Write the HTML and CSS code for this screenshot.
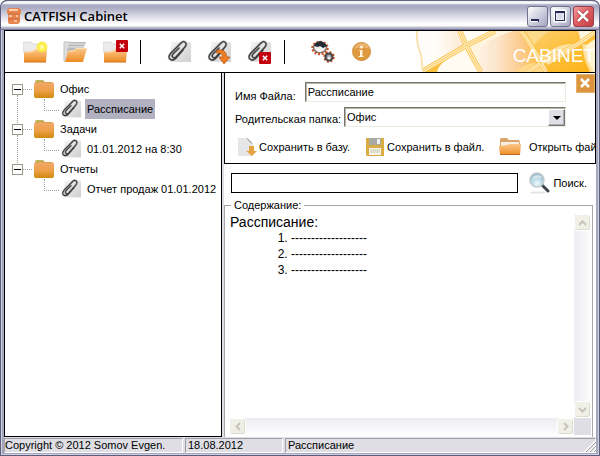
FILE: index.html
```
<!DOCTYPE html>
<html lang="ru">
<head>
<meta charset="utf-8">
<title>CATFISH Cabinet</title>
<link rel="stylesheet" href="styles.css">
</head>
<body>
<svg class="defs" width="0" height="0" aria-hidden="true">
  <defs>
    <linearGradient id="orange" x2="0" y2="1"><stop stop-color="#fbc78a"/><stop offset=".6" stop-color="#f3a44e"/><stop offset="1" stop-color="#ee8a22"/></linearGradient>
    <linearGradient id="tan" x2="0" y2="1"><stop stop-color="#f2a866"/><stop offset=".5" stop-color="#eda04a"/><stop offset="1" stop-color="#cf8a0c"/></linearGradient>
    <linearGradient id="paper" x2="1" y2="1"><stop stop-color="#f4f4f4"/><stop offset="1" stop-color="#cfcfd1"/></linearGradient>
    <linearGradient id="gold" x2="1" y2="1"><stop stop-color="#fcd078"/><stop offset=".5" stop-color="#fcc03c"/><stop offset="1" stop-color="#fcb415"/></linearGradient>
    <linearGradient id="petal" x2="1"><stop stop-color="#fffaf3"/><stop offset=".4" stop-color="#fce7cf"/><stop offset=".7" stop-color="#fbcb8c"/><stop offset="1" stop-color="#fcb829"/></linearGradient>
    <linearGradient id="blush" x2="1"><stop offset=".4" stop-color="#fffdf9"/><stop offset="1" stop-color="#fbe6cd"/></linearGradient>
    <radialGradient id="sun"><stop stop-color="#fffde0"/><stop offset=".4" stop-color="#fff45c"/><stop offset=".75" stop-color="#fbe93c"/><stop offset="1" stop-color="#fbe93c" stop-opacity="0"/></radialGradient>
    <radialGradient id="lens" cx=".5" cy=".75" r=".7"><stop stop-color="#eefafb"/><stop offset=".6" stop-color="#b3d6e2"/><stop offset="1" stop-color="#8fb3c4"/></radialGradient>
    <symbol id="folder-closed" viewBox="0 0 24 24">
      <path d="M0 2h8l2 2h11v8H0z" fill="#ebebeb" stroke="#cdcdcd" stroke-width=".6"/>
      <path d="M1 22V12l8-1 3-2h12l-1 13z" fill="url(#orange)"/>
      <path d="M2 12.500l7-.7 3-2h11" fill="none" stroke="#fde1bd"/>
      <path d="M1 22h22" stroke="#cf7217"/>
    </symbol>
    <symbol id="clip" viewBox="0 0 24 24">
      <path d="M4 2h20v20H4z" fill="url(#paper)"/>
      <g fill="none" stroke-linecap="round" stroke-linejoin="round">
        <path d="M12 8L6 14c-2 3 1 5 3 3l9-10c3-4-1-7-4-4L4 13c-5 6 1 9 5 5l7-8" stroke="#bbb" stroke-width="2.600"/>
        <path d="M12 8L6 14c-2 3 1 5 3 3l9-10c3-4-1-7-4-4L4 13c-5 6 1 9 5 5l7-8" stroke="#3b3b3b" stroke-width="1.300"/>
      </g>
    </symbol>
    <symbol id="folder-flat" viewBox="0 0 20 20">
      <path d="M1 3q0-2 2-2h6l2 2h7q1 0 1 2v12H1z" fill="#d9a45c"/>
      <path d="M2 2h7" stroke="#a4bd5f" stroke-width="1"/>
      <path d="M0 5q0-1 1-1h18q1 0 1 1v12q0 2-2 2H2q-2 0-2-2z" fill="url(#tan)"/>
    </symbol>
    <symbol id="delete-mark" viewBox="0 0 11 11">
      <rect width="11" height="11" rx="1" fill="#c4000c"/>
      <path d="M3.500 3.500l4 4m0-4l-4 4" stroke="#fff" stroke-width="1.400"/>
    </symbol>
  </defs>
</svg>
<div class="window">
  <header class="titlebar">
    <svg class="app-icon" width="16" height="18" viewBox="0 0 16 18" aria-hidden="true">
      <path d="M1 3l2-2h10l2 2v3l-1 1v8l-2 2H3l-1-2V7L1 6z" fill="#e8854d"/>
      <path d="M3 2h9v2H3z" fill="#fbd0b2"/><path d="M2 7h12M2 12h12" stroke="#cf6a3a"/>
      <path d="M3 9h3m4 0h2M8 14h3" stroke="#fff"/>
    </svg>
    <h1>CATFISH Cabinet</h1>
    <button class="caption" aria-label="Minimize"><svg width="21" height="21"><rect x="4" y="13" width="8" height="3" fill="#27275a"/><path d="M4 15.500h7" stroke="#fff"/></svg></button>
    <button class="caption" aria-label="Maximize"><svg width="21" height="21"><rect x="5" y="5" width="10" height="10" fill="#dcdce8" stroke="#fff" stroke-width="3"/><rect x="5.500" y="5.500" width="9" height="9" fill="none" stroke="#27275a"/><path d="M5 6h10" stroke="#27275a" stroke-width="2"/></svg></button>
    <button class="caption caption-close" aria-label="Close"><svg width="21" height="21"><path d="M5 5l10 10M15 5L5 15" stroke="#a63543" stroke-width="4"/><path d="M5 5l10 10M15 5L5 15" stroke="#fff" stroke-width="2.500"/></svg></button>
  </header>

  <div class="client">
    <nav class="toolbar">
      <div class="tools">
        <button class="tool" aria-label="Новая папка"><svg width="26" height="24" viewBox="0 0 26 24"><use href="#folder-closed" width="24" height="24"/><circle cx="19" cy="7" r="6" fill="url(#sun)"/></svg></button>
        <button class="tool" aria-label="Открыть папку"><svg width="24" height="24" viewBox="0 0 24 24"><path d="M1 2h6l1 2h10v17H1z" fill="#dedede" stroke="#c3c3c3"/><path d="M5 6l2-4h16l-4 10H4z" fill="#b9bbbb"/><path d="M6 4h16M5 7h16" stroke="#e8eaea"/><path d="M2 22L5 11l7-1 1-2h11l-4 14z" fill="url(#orange)"/><path d="M5 11.500l7-1 1-2h10" stroke="#fde1bd" fill="none"/></svg></button>
        <button class="tool" aria-label="Удалить папку"><svg width="25" height="24" viewBox="0 0 25 24"><use href="#folder-closed" width="24" height="24"/><use href="#delete-mark" x="13" y="0" width="12" height="12"/></svg></button>
      </div>
      <span class="divider"></span>
      <div class="tools">
        <button class="tool" aria-label="Новый файл"><svg width="24" height="24"><use href="#clip"/></svg></button>
        <button class="tool" aria-label="Импорт файла"><svg width="24" height="24" viewBox="0 0 24 24"><use href="#clip"/><path d="M9 11q9-4 11 6h3l-6 7-5-7h4q-1-5-7-4z" fill="#f07e20" stroke="#b95510" stroke-width=".7"/></svg></button>
        <button class="tool" aria-label="Удалить файл"><svg width="24" height="24"><use href="#clip"/><use href="#delete-mark" x="12" y="12" width="12" height="12"/></svg></button>
      </div>
      <span class="divider"></span>
      <div class="tools">
        <button class="tool" aria-label="Настройки"><svg width="24" height="24" viewBox="0 0 24 24">
          <ellipse cx="9" cy="8" rx="7.500" ry="6" fill="none" stroke="#c9551f" stroke-width="2.500" stroke-dasharray="2 1.500"/>
          <ellipse cx="9" cy="7.500" rx="6.500" ry="5" fill="#eee" stroke="#8b6f66" stroke-width="1.500"/><path d="M3 6q1-4 6-5 5 1 7 5l-4 2-3-2-2 1z" fill="#252a33"/><path d="M5 9q2-2 3 0t4-1l-2 4H7z" fill="#f9f9f9"/>
          <circle cx="18" cy="17" r="4.500" fill="none" stroke="#c9551f" stroke-width="2.500" stroke-dasharray="2 1.500"/>
          <circle cx="18" cy="17" r="3.500" fill="#9ea1a5" stroke="#434448" stroke-width="2"/><circle cx="18" cy="18" r="1.500" fill="#eee"/></svg></button>
        <button class="tool" aria-label="О программе"><svg width="24" height="24" viewBox="0 0 24 24"><circle cx="10.500" cy="11.500" r="9.200" fill="#de9840" stroke="#c98632" stroke-width=".6"/><path d="M3 9q2-6 8-6t8 6q-8-3-16 0z" fill="#eab36c"/><path d="M8.500 10h3v6h1v1h-5v-1h1.500v-5H8z" fill="#fff3e0"/><circle cx="10.500" cy="7" r="1.500" fill="#fff3e0"/></svg></button>
      </div>
      <div class="banner">
        <svg class="banner-art" width="180" height="41" viewBox="0 0 180 41" preserveAspectRatio="xMaxYMid slice" aria-hidden="true">
          <path d="M1 0h45l6 14L9 39Q8 20 1 0z" fill="url(#blush)"/>
          <path d="M52 14L46 0h60l26 41H66z" fill="url(#petal)"/>
          <path d="M46 0h36L52 14z" fill="#fffcf4"/>
          <path d="M9 41L52 14l14 27z" fill="#fffbf2"/>
          <path d="M9 41L51 16 31 29q-8 6-9 12z" fill="#fcc03f"/>
          <path d="M106 0h74v41h-48l-12-20z" fill="url(#gold)"/>
          <path d="M111 0h23q-9 6-15 14z" fill="#fdd98c"/>
          <path d="M126 28q14-16 34-15l-3 7-24 14z" fill="#fde2a4"/>
          <path d="M163 0h17L163 16q4-8 0-16z" fill="#fff6df"/>
          <path d="M170 15l10-7v33h-5q-5-12-5-26z" fill="#fff3d2"/>
          <path d="M66 41q-5-18 1-25Q77 6 98 0H80L52 14z" fill="#fff4de"/>
          <path d="M100 41q10-10 25-9l6 9z" fill="#fdd98c"/>
          <g fill="none" stroke="#fac04a" stroke-width="5"><path d="M8 40L52 14Q69 6 80 0M45 0q7 18 21 41M106 0q14 19 25 41M112 41l24-15Q164 15 180 1"/></g>
          <g fill="none" stroke="#ffe9b4" stroke-width="3.500"><path d="M8 40L52 14Q69 6 80 0M45 0q7 18 21 41M106 0q14 19 25 41M112 41l24-15Q164 15 180 1"/></g>
          <g fill="none" stroke="#f8cf70"><path d="M8 40L52 14Q69 6 80 0M45 0q7 18 21 41M106 0q14 19 25 41M112 41l24-15Q164 15 180 1"/></g>
          <path d="M169 13q0 14 8 28" fill="none" stroke="#ffe2a0" stroke-width="3"/>
          <path d="M2 0q-1 11 3 21 3 8 2 18" fill="none" stroke="#fae3ae" stroke-width="2"/>
        </svg>
        <span class="banner-title">CABINET</span>
      </div>
    </nav>

    <main class="workspace">
      <ul class="tree">
        <li class="branch">
          <div class="row"><button class="toggle" aria-label="Свернуть"></button><svg width="20" height="20"><use href="#folder-flat"/></svg><span class="name">Офис</span></div>
          <div class="row leaf"><svg width="20" height="20"><use href="#clip"/></svg><span class="name selected">Рассписание</span></div>
        </li>
        <li class="branch">
          <div class="row"><button class="toggle" aria-label="Свернуть"></button><svg width="20" height="20"><use href="#folder-flat"/></svg><span class="name">Задачи</span></div>
          <div class="row leaf"><svg width="20" height="20"><use href="#clip"/></svg><span class="name">01.01.2012 на 8:30</span></div>
        </li>
        <li class="branch">
          <div class="row"><button class="toggle" aria-label="Свернуть"></button><svg width="20" height="20"><use href="#folder-flat"/></svg><span class="name">Отчеты</span></div>
          <div class="row leaf"><svg width="20" height="20"><use href="#clip"/></svg><span class="name">Отчет продаж 01.01.2012</span></div>
        </li>
      </ul>

      <section class="details">
        <form class="properties">
          <button type="button" class="close-panel" aria-label="Закрыть"><svg width="19" height="19"><path d="M5 5l8 8M13 5l-8 8" stroke="#fff" stroke-width="2.500"/></svg></button>
          <div class="field"><label for="file">Имя Файла:</label><input id="file" class="sunken" value="Рассписание"></div>
          <div class="field field-parent"><label for="parent">Родительская папка:</label>
            <span class="combo"><select id="parent" class="sunken"><option>Офис</option></select><span class="combo-arrow"><svg width="8" height="4"><path d="M0 0h8L4 4z"/></svg></span></span></div>
          <div class="actions">
            <button type="button"><svg width="20" height="20" viewBox="0 0 20 20"><path d="M1 1h9l6 6v12H1z" fill="#e5e6e7"/><path d="M9 0l7 7-2-1-3-3z" fill="#777"/><path d="M12 9h5v5h3l-5 5-6-5h3z" fill="#e5a444"/></svg>Сохранить в базу.</button>
            <button type="button"><svg width="20" height="20" viewBox="0 0 20 20"><path d="M1 1h18v18H2l-1-1z" fill="#d9ad42"/><path d="M4 1h12v7H4z" fill="#a9a9a4"/><path d="M12 2h3v5h-3z" fill="#eee"/><path d="M4 11h12v7H4z" fill="#f4f3ec"/><path d="M5 13h10M5 15h10" stroke="#cfc8ad"/></svg>Сохранить в файл.</button>
            <button type="button" class="open"><svg width="22" height="20" viewBox="0 0 22 20"><path d="M1 2l1-1h6l2 2h10l1 2v12H1z" fill="#dba46d"/><path d="M2 5h18v5H2z" fill="#f8eee4"/><path d="M0 9l8-1 2-1h12l-1 11H1z" fill="url(#orange)"/><path d="M1 17.500h20" stroke="#bb6b22"/></svg>Открыть файл.</button>
          </div>
        </form>

        <form class="search">
          <input class="query" aria-label="Поиск">
          <button type="button"><svg width="22" height="22" viewBox="0 0 22 22"><ellipse cx="9" cy="20.500" rx="8" ry="1" fill="#e3e3e3"/><path d="M13 13l6 6" stroke="#41464d" stroke-width="3" stroke-linecap="round"/><circle cx="8" cy="8" r="7" fill="url(#lens)" stroke="#c3cace" stroke-width="1.500"/><path d="M3 7q1-4 6-4 3 0 4 3-4-1-10 1z" fill="#fff" opacity=".5"/></svg>Поиск.</button>
        </form>

        <fieldset class="contents">
          <legend>Содержание:</legend>
          <div class="viewer">
            <article class="text">
              <p>Рассписание:</p>
              <ol><li>-------------------</li><li>-------------------</li><li>-------------------</li></ol>
            </article>
            <div class="scroll scroll-v"><button aria-label="Вверх"><svg width="9" height="6"><path d="M1 5l3.500-3.500L8 5"/></svg></button><button aria-label="Вниз"><svg width="9" height="6"><path d="M1 1l3.500 3.500L8 1"/></svg></button></div>
            <div class="scroll scroll-h"><button aria-label="Влево"><svg width="6" height="9"><path d="M5 1L1.500 4.500 5 8"/></svg></button><button aria-label="Вправо"><svg width="6" height="9"><path d="M1 1l3.500 3.500L1 8"/></svg></button></div>
            <div class="corner"></div>
          </div>
        </fieldset>
      </section>
    </main>

    <footer class="status">
      <span class="cell cell-copy">Copyright © 2012 Somov Evgen.</span>
      <span class="cell cell-date">18.08.2012</span>
      <span class="cell cell-file">Рассписание</span>
      <svg class="grip" width="12" height="12" aria-hidden="true"><path d="M1 12L12 1M5 12l7-7M9 12l3-3" stroke="#fff" stroke-width="2"/><path d="M2 12L12 2M6 12l6-6M10 12l2-2" stroke="#9a9aa0"/></svg>
    </footer>
  </div>
</div>
</body>
</html>
```
FILE: styles.css
```
* { box-sizing: border-box; }

body {
  margin: 0;
  background: #fff;
  color: #000;
  font: 11px/14px "Liberation Sans", Arial, sans-serif;
}

.defs { position: absolute; }
svg { display: block; flex: none; }
button {
  padding: 0;
  border: 0;
  background: none;
  color: inherit;
  font: inherit;
  white-space: nowrap;
}

.window {
  display: flex;
  flex-direction: column;
  min-height: 100vh;
  padding: 0 4px 3px;
  border-radius: 7px 7px 0 0;
  background: #a5a5be;
  box-shadow: inset 0 0 0 1px #5c5c7c, inset 0 0 0 2px #cfcfe0;
}

.titlebar {
  display: flex;
  align-items: center;
  gap: 2px;
  height: 30px;
  margin: 0 -3px;
  padding: 2px 5px 0;
  border-top: 1px solid #66667e;
  border-bottom: 1px solid #77779a;
  border-radius: 7px 7px 0 0;
  background: linear-gradient(#e8e8f0 0, #fff 2px, #a9a9c3 4px, #adadc5 7px, #cfcfdd 13px, #fbfbfd 22px, #fff 25px, #c2c2d2 26px, #a5a5be 28px);
}
.titlebar h1 {
  flex: 1;
  margin: 0;
  font: 600 13px/18px "Open Sans", "Noto Sans", sans-serif;
}
.caption {
  width: 21px;
  height: 21px;
  border: 1px solid #73738f;
  border-radius: 3px;
  background: linear-gradient(135deg, #fff, #d5d5e3 45%, #a4a4c0);
}
.caption svg { margin: -1px; }
.caption-close {
  border-color: #963e4d;
  background: linear-gradient(135deg, #f3a29f, #dc5b5d 50%, #c53f48);
}

.client {
  display: flex;
  flex: 1;
  flex-direction: column;
  background: #dedee4;
}
.toolbar {
  display: flex;
  align-items: center;
  height: 43px;
  padding-left: 18px;
  border: 1px solid #000;
  background: #fff;
}
.tools { display: flex; gap: 16px; }
.tool { width: 24px; height: 24px; }
.tool svg { overflow: visible; }
.divider {
  width: 1px;
  height: 24px;
  margin: 0 26px 0 13px;
  background: #000;
}
.banner {
  display: grid;
  flex: 1;
  min-width: 0;
  overflow: hidden;
}
.banner > * { grid-area: 1 / 1; justify-self: end; }
.banner-title {
  align-self: center;
  padding-top: 8px;
  color: #fff;
  font-size: 19px;
  line-height: 20px;
}

.workspace {
  display: grid;
  flex: 1;
  grid-template-columns: 218px minmax(0, 1fr);
  gap: 2px;
}

.tree {
  margin: 0;
  padding: 6px 0 0 7px;
  border: 1px solid #000;
  border-top: 0;
  background: #fff;
  list-style: none;
}
.branch { position: relative; }
.branch:not(:last-child)::before {
  position: absolute;
  top: 16px;
  bottom: -4px;
  left: 5px;
  border-left: 1px dotted #a29f8e;
  content: "";
}
.row {
  display: flex;
  align-items: center;
  height: 20px;
}
.toggle {
  position: relative;
  width: 11px;
  height: 11px;
  margin-right: 11px;
  border: 1px solid #9b9988;
  background: linear-gradient(#000, #000) center / 7px 1px no-repeat #fff;
}
.toggle::after {
  position: absolute;
  top: 4px;
  left: 10px;
  width: 9px;
  border-top: 1px dotted #a29f8e;
  content: "";
}
.name { margin-left: 4px; padding: 0 2px; line-height: 20px; }
.leaf { padding-left: 32px; }
.leaf::before {
  align-self: flex-start;
  width: 14px;
  height: 11px;
  margin-right: 2px;
  border: dotted #a29f8e;
  border-width: 0 0 1px 1px;
  content: "";
}
.selected { background: #b1b1c0; }

.details {
  display: flex;
  flex-direction: column;
  min-width: 0;
  background: #fff;
}
.properties {
  position: relative;
  overflow: hidden;
  padding: 8px 29px 6px 10px;
  border: 1px solid #000;
  border-top: 0;
}
.close-panel {
  position: absolute;
  top: 1px;
  right: 0;
  border: 1px solid #e9b06a;
  background: #dc963f;
}
.close-panel svg { margin: -1px; }
.field {
  display: flex;
  align-items: center;
  gap: 9px;
  margin-bottom: 4px;
}
.field label { padding-top: 8px; white-space: nowrap; }
.field-parent { gap: 3px; }
.field-parent label { padding-top: 4px; }
.sunken {
  flex: 1;
  width: 100%;
  min-width: 0;
  height: 20px;
  padding: 0 2px 1px;
  border: 1px solid #ecebdf;
  border-top-color: #77756b;
  border-left-color: #77756b;
  border-radius: 0;
  appearance: none;
  background: #fff;
  color: #000;
  font: inherit;
  box-shadow: inset 1px 1px #b5b3aa;
}
.combo { position: relative; display: flex; flex: 1; }
.combo-arrow {
  position: absolute;
  top: 2px;
  right: 1px;
  display: grid;
  width: 17px;
  height: 17px;
  place-items: center;
  border: 1px solid #fff;
  border-right-color: #777;
  border-bottom-color: #777;
  background: #dfdfe5;
  box-shadow: inset -1px -1px #aaaab0;
  pointer-events: none;
}
.actions {
  display: grid;
  grid-template-columns: 128px 134px max-content;
  margin: 10px 0 0 2px;
}
.actions button, .search button { display: flex; align-items: center; gap: 2px; }
.actions .open { gap: 8px; }

.search {
  display: flex;
  align-items: center;
  gap: 11px;
  margin: 8px 9px 4px 7px;
}
.query {
  flex: 1;
  min-width: 0;
  height: 20px;
  padding: 0 3px;
  border: 1px solid #000;
}

.contents {
  display: flex;
  flex: 1;
  flex-direction: column;
  min-width: 0;
  margin: 0 3px 0 0;
  padding: 2px 1px 2px 4px;
  border: 1px solid #a8a8a8;
  border-bottom: 0;
}
.contents legend { margin-left: 2px; padding: 0 3px; line-height: 14px; }
.viewer {
  display: grid;
  flex: 1;
  grid-template: 1fr 17px / minmax(0, 1fr) 17px;
}
.text { font-size: 12px; line-height: 16px; }
.text p { margin: 0; padding-left: 1px; font-size: 14px; }
.text ol { margin: 0; padding-left: 62px; }
.scroll { display: flex; justify-content: space-between; }
.scroll-v { flex-direction: column; background: linear-gradient(90deg, #ececf3, #fdfdfe); }
.scroll-h { background: linear-gradient(#ececf3, #fdfdfe); }
.scroll button {
  display: grid;
  width: 17px;
  height: 17px;
  place-items: center;
  border: 1px solid #fff;
  border-radius: 3px;
  background: #f0f0e9;
  box-shadow: inset -1px -1px #dcdccb;
}
.scroll path { fill: none; stroke: #c5c5b9; stroke-width: 2; }
.corner { background: #dedee4; }

.status {
  position: relative;
  display: flex;
  gap: 2px;
  height: 16px;
  padding-top: 1px;
}
.cell {
  padding-left: 2px;
  border: 1px solid #a0a0a6;
  border-right-color: #fff;
  border-bottom-color: #fff;
  line-height: 12px;
  white-space: nowrap;
}
.cell-copy { width: 179px; padding-left: 0; }
.cell-date { width: 98px; }
.cell-file { flex: 1; }
.grip { position: absolute; right: 0; bottom: 1px; }
```
